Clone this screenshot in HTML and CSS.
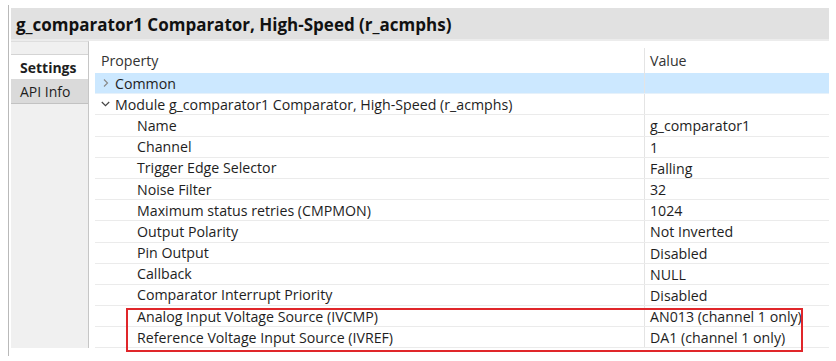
FILE: index.html
```html
<!DOCTYPE html>
<html lang="en">

<head>
  <meta charset="UTF-8" />
  <title>g_comparator1 Properties</title>
  <link rel="stylesheet" href="styles.css">
</head>

<body>
  <div class="window">
    <div class="title">g_comparator1 Comparator, High-Speed (r_acmphs)</div>
    <div class="main">
      <div class="tabs">
        <div class="tab active">Settings</div>
        <div class="tab">API Info</div>
      </div>
      <div class="grid">
        <div class="row head">
          <div class="prop">Property</div>
          <div class="val">Value</div>
        </div>
        <div class="row selected">
          <div class="prop">
            <svg class="twisty" width="9" height="10" viewBox="0 0 9 10"><path d="M3 1.5 L6.5 5 L3 8.5" fill="none" stroke="#8a8a8a" stroke-width="1.2"/></svg>
            Common
          </div>
          <div class="val"></div>
        </div>
        <div class="row">
          <div class="prop">
            <svg class="twisty" width="9" height="10" viewBox="0 0 9 10"><path d="M0.8 3 L4.5 6.7 L8.2 3" fill="none" stroke="#444" stroke-width="1.2"/></svg>
            Module g_comparator1 Comparator, High-Speed (r_acmphs)
          </div>
          <div class="val"></div>
        </div>
        <div class="row child"><div class="prop">Name</div><div class="val">g_comparator1</div></div>
        <div class="row child"><div class="prop">Channel</div><div class="val">1</div></div>
        <div class="row child"><div class="prop">Trigger Edge Selector</div><div class="val">Falling</div></div>
        <div class="row child"><div class="prop">Noise Filter</div><div class="val">32</div></div>
        <div class="row child"><div class="prop">Maximum status retries (CMPMON)</div><div class="val">1024</div></div>
        <div class="row child"><div class="prop">Output Polarity</div><div class="val">Not Inverted</div></div>
        <div class="row child"><div class="prop">Pin Output</div><div class="val">Disabled</div></div>
        <div class="row child"><div class="prop">Callback</div><div class="val">NULL</div></div>
        <div class="row child"><div class="prop">Comparator Interrupt Priority</div><div class="val">Disabled</div></div>
        <div class="marked">
          <div class="row child"><div class="prop">Analog Input Voltage Source (IVCMP)</div><div class="val">AN013 (channel 1 only)</div></div>
          <div class="row child"><div class="prop">Reference Voltage Input Source (IVREF)</div><div class="val">DA1 (channel 1 only)</div></div>
        </div>
      </div>
    </div>
  </div>
</body>
</html>
```

FILE: styles.css
```css
* {
  box-sizing: border-box;
  font-family: 'Open Sans', sans-serif;
}

body {
  margin: 0;
  padding: 5px 7px 0 8px;
  background-color: #fff;
  color: #1e1e1e;
}

.window {
  border-left: 1px solid #b9b9b9;
  padding: 3px 0 0 2px;
  height: 351px;
}

.title {
  background-color: #e1e1e1;
  height: 33px;
  line-height: 33px;
  padding-left: 5px;
  font-size: 17px;
  font-weight: 700;
  color: #111;
  border-bottom: 2px solid #ececec;
}

.main {
  display: flex;
}

.tabs {
  width: 78px;
  height: 307px;
  padding-top: 12px;
  background-color: #f0f0f0;
  border-right: 1px solid #c6c6c6;
  border-top: 1px solid #dedede;
}

.tab {
  height: 25px;
  line-height: 26px;
  padding-left: 9px;
  font-size: 14px;
  background-color: #dadada;
  border-bottom: 1px solid #c2c2c2;
}

.tab.active {
  background-color: #fff;
  font-weight: 700;
  border-top: 1px solid #d4d4d4;
  border-bottom: none;
}

.grid {
  margin-left: 6px;
  width: 734px;
  padding-top: 7px;
}

.row {
  display: flex;
  height: 21.2px;
  line-height: 21px;
  font-size: 14.2px;
  border-bottom: 1px solid #ebebeb;
}

.row.head {
  height: 25px;
  line-height: 26px;
  border-bottom: none;
  color: #333;
}

.row.selected {
  background-color: #cce8ff;
  border-bottom: 1px solid #e6f1fa;
}

.prop {
  width: 549px;
  padding-left: 6px;
  white-space: nowrap;
  display: flex;
  align-items: center;
  gap: 5px;
}

.row.child .prop {
  padding-left: 42px;
}

.val {
  flex: 1;
  border-left: 1px solid #e4e4e4;
  padding-left: 5px;
  white-space: nowrap;
}

.marked {
  position: relative;
}

.marked::after {
  content: "";
  position: absolute;
  left: 31px;
  right: 26px;
  top: 2px;
  bottom: -4px;
  border: 2px solid #e0262a;
  pointer-events: none;
}
```
